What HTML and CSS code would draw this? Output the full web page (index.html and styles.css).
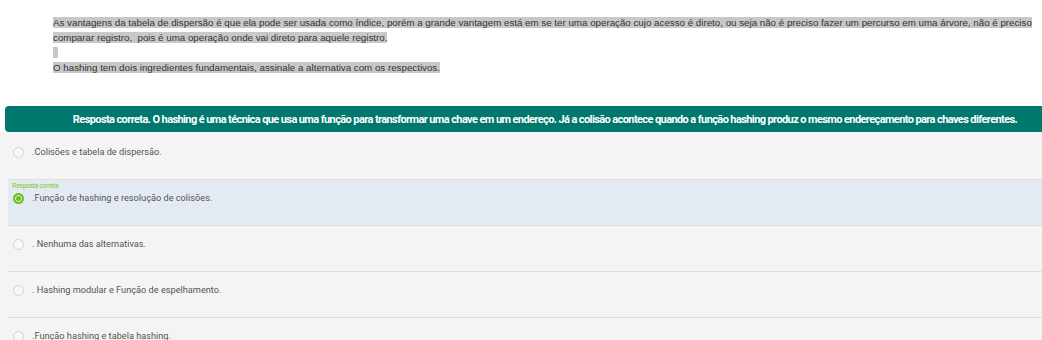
FILE: index.html
```html
<!DOCTYPE html>
<html lang="pt-BR">
<head>
<meta charset="utf-8">
<title>Questão</title>
<link rel="stylesheet" href="styles.css">
</head>
<body>
<div class="page">
  <div class="question">
    <p class="para"><span class="hl">As vantagens da tabela de dispersão é que ela pode ser usada como índice, porém a grande vantagem está em se ter uma operação cujo acesso é direto, ou seja não é preciso fazer um percurso em uma árvore, não é preciso <br>comparar registro,&nbsp; pois é uma operação onde vai direto para aquele registro.</span></p>
    <p class="para"><span class="hl blank">&nbsp;</span></p>
    <p class="para"><span class="hl">O hashing tem dois ingredientes fundamentais, assinale a alternativa com os respectivos.</span></p>
  </div>
  <div class="feedback">Resposta correta. O hashing é uma técnica que usa uma função para transformar uma chave em um endereço. Já a colisão acontece quando a função hashing produz o mesmo endereçamento para chaves diferentes.</div>
  <div class="options">
    <div class="option">
      <span class="radio"></span>
      <span class="opt-text">.Colisões e tabela de dispersão.</span>
    </div>
    <div class="option correct">
      <span class="badge">Resposta correta</span>
      <span class="radio checked"></span>
      <span class="opt-text">.Função de hashing e resolução de colisões.</span>
    </div>
    <div class="option">
      <span class="radio"></span>
      <span class="opt-text">. Nenhuma das alternativas.</span>
    </div>
    <div class="option">
      <span class="radio"></span>
      <span class="opt-text">. Hashing modular e Função de espelhamento.</span>
    </div>
    <div class="option">
      <span class="radio"></span>
      <span class="opt-text">.Função hashing e tabela hashing.</span>
    </div>
  </div>
</div>
</body>
</html>
```

FILE: styles.css
```css
html, body {
  margin: 0;
  padding: 0;
  background: #ffffff;
  overflow: hidden;
}

.page {
  width: 1085px;
}

.question {
  padding: 15px 0 0 53px;
  font-family: "Liberation Sans", Arial, sans-serif;
  font-size: 9.75px;
  line-height: 15px;
  color: #333333;
}

.para {
  margin: 0;
}

.hl {
  background: #c8c8c8;
}

.blank {
  padding-right: 2px;
}

.feedback {
  margin: 31px 0 0 5px;
  height: 26px;
  border-radius: 4px 0 0 4px;
  background: #00786e;
  color: #ffffff;
  font-family: Roboto, "Liberation Sans", sans-serif;
  font-weight: 700;
  font-size: 11px;
  letter-spacing: -0.6px;
  display: flex;
  align-items: center;
  justify-content: center;
  white-space: nowrap;
}

.options {
  background: #f4f4f4;
  padding-top: 2px;
  height: 220px;
}

.option {
  position: relative;
  margin-left: 8px;
  height: 45px;
  border-bottom: 1px solid #dedede;
  display: flex;
  align-items: flex-start;
}

.option.correct {
  background: #e4eaf1;
}

.radio {
  margin: 13px 0 0 5px;
  width: 9px;
  height: 9px;
  border: 1px solid #d2d2d2;
  border-radius: 50%;
  background: #f8f8f8;
  flex: none;
}

.radio.checked {
  border: 2px solid #6cc01b;
  width: 7px;
  height: 7px;
  background: #6cc01b;
  box-shadow: inset 0 0 0 1px #e4eaf1;
}

.opt-text {
  margin: 11px 0 0 8px;
  font-family: Roboto, "Liberation Sans", sans-serif;
  font-size: 9.2px;
  line-height: 14px;
  color: #555555;
}

.badge {
  position: absolute;
  left: 4px;
  top: 2px;
  font-family: "Liberation Sans", Arial, sans-serif;
  font-size: 6.3px;
  letter-spacing: -0.1px;
  line-height: 8px;
  color: #7cc414;
}
```
